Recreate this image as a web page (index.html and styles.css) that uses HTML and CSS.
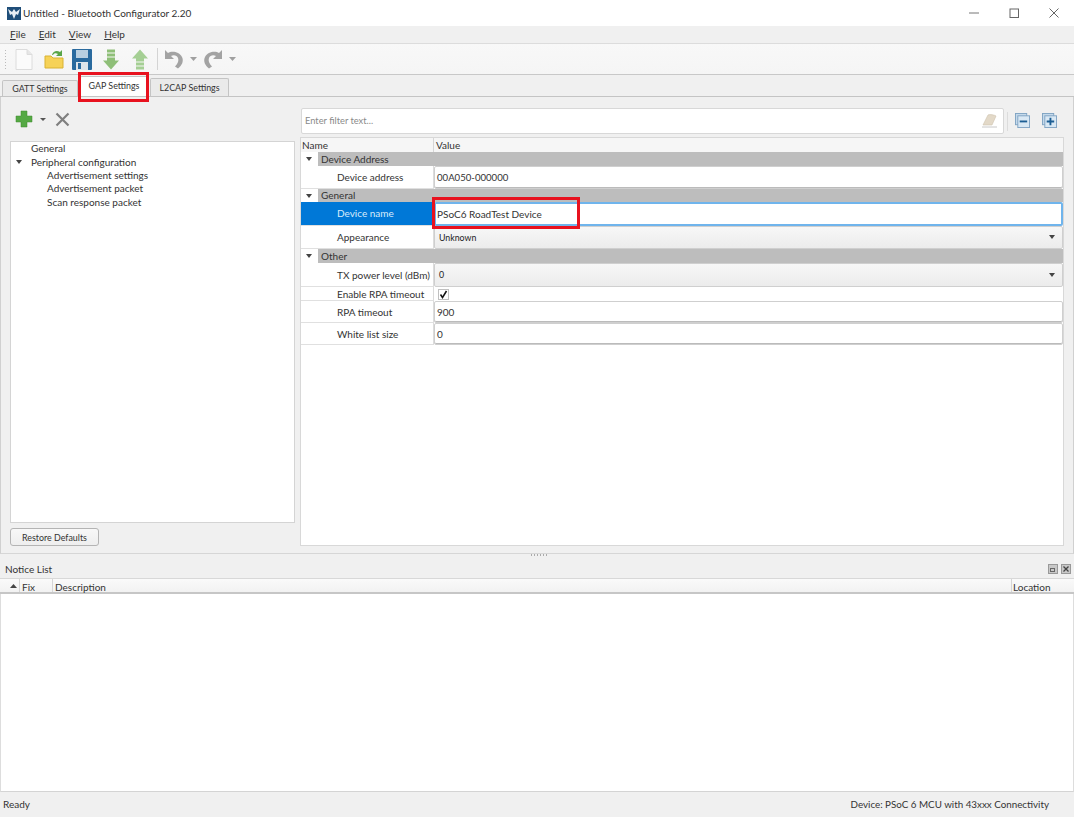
FILE: index.html
```html
<!DOCTYPE html>
<html lang="en">
<head>
<meta charset="utf-8">
<title>Untitled - Bluetooth Configurator 2.20</title>
<link rel="stylesheet" href="styles.css">
</head>
<body>
<div class="window">
  <header class="titlebar">
    <svg class="appicon" width="14" height="13" viewBox="0 0 14 13"><rect width="14" height="13" fill="#1f4e79"/><path d="M1 2l4 3 2-3 2 3 4-3-2 6-2-1-2 5-2-5-2 1z" fill="#e8eef4"/></svg>
    <span class="title">Untitled - Bluetooth Configurator 2.20</span>
    <div class="winctl">
      <svg width="12" height="12" viewBox="0 0 12 12"><path d="M1 6h10" stroke="#777" fill="none"/></svg>
      <svg width="12" height="12" viewBox="0 0 12 12"><rect x="2" y="2" width="8.5" height="8.5" stroke="#666" fill="none"/></svg>
      <svg width="12" height="12" viewBox="0 0 12 12"><path d="M1.5 1.5l9 9M10.5 1.5l-9 9" stroke="#666" fill="none"/></svg>
    </div>
  </header>
  <nav class="menubar"><span><u>F</u>ile</span><span><u>E</u>dit</span><span><u>V</u>iew</span><span><u>H</u>elp</span></nav>
  <div class="toolbar">
    <div class="grip"></div>
    <svg class="t-new" width="18" height="21" viewBox="0 0 18 21"><path d="M1 .5h11l5 5v15H1z" fill="#fbfbfb" stroke="#dcdcdc"/><path d="M12 .5v5h5" fill="#e6e6e6" stroke="#dcdcdc"/></svg>
    <svg class="t-open" width="20" height="20" viewBox="0 0 20 20"><path d="M1 7h6l2 2h10v10H1z" fill="#f6d257" stroke="#d9b233"/><path d="M8 6c1-4 5-5 8-3l2-2v6h-6l2-2c-2-1-4-1-5 1z" fill="#5aa548"/></svg>
    <svg class="t-save" width="20" height="21" viewBox="0 0 20 21"><rect width="20" height="21" rx="1" fill="#2a6a9e"/><rect x="4" y="1" width="12" height="8" fill="#b9cfe0"/><rect x="4" y="13" width="12" height="8" fill="#dfe5ea"/><rect x="6" y="14" width="3" height="6" fill="#2a6a9e"/></svg>
    <svg class="t-down" width="18" height="21" viewBox="0 0 18 21"><path d="M5 .5h8v3H5zM5 4.500h8v3H5zM5 8.500h8v3h4l-8 9-8-9h4z" fill="#8fbf78"/></svg>
    <svg class="t-up" width="18" height="21" viewBox="0 0 18 21"><path d="M9 .5l8 9h-4v3H5v-3H1zM5 13.500h8v3H5zM5 17.500h8v3H5z" fill="#a5cf94"/></svg>
    <div class="tb-sep"></div>
    <svg class="t-undo" width="21" height="20" viewBox="0 0 21 20"><path d="M2 1v9h9L8 7c3-1.500 6-.5 7 2 1 2.500 0 5.500-3 8.500l3 2c4-3 6-7.500 4-11.500C16.500 3 9 1.500 5 4z" fill="#a3a3a3"/></svg>
    <svg class="t-drop1" width="7" height="4" viewBox="0 0 7 4"><path d="M0 0h7L3.500 4z" fill="#a0a0a0"/></svg>
    <svg class="t-redo" width="21" height="20" viewBox="0 0 21 20"><path d="M19 1v9h-9l3-3c-3-1.500-6-.5-7 2-1 2.500 0 5.500 3 8.500l-3 2c-4-3-6-7.500-4-11.500C4.500 3 12 1.500 16 4z" fill="#a3a3a3"/></svg>
    <svg class="t-drop2" width="7" height="4" viewBox="0 0 7 4"><path d="M0 0h7L3.500 4z" fill="#a0a0a0"/></svg>
  </div>
  <div class="tabs">
    <div class="tab t1">GATT Settings</div>
    <div class="tab t2">GAP Settings</div>
    <div class="tab t3">L2CAP Settings</div>
  </div>
  <main class="page">
    <section class="left">
      <div class="leftbar">
        <svg width="18" height="18" viewBox="0 0 18 18"><path d="M6 1h6v5h5v6h-5v5H6v-5H1V6h5z" fill="#55a944" stroke="#3c8a2e" stroke-width=".5"/></svg>
        <svg class="plusdrop" width="6" height="3" viewBox="0 0 6 3"><path d="M0 0h6L3 3z" fill="#555"/></svg>
        <svg width="15" height="15" viewBox="0 0 15 15"><path d="M1.500 1.500l12 12M13.500 1.500l-12 12" stroke="#7f7f7f" stroke-width="2.200" fill="none"/></svg>
      </div>
      <div class="tree">
        <div class="node lvl1">General</div>
        <div class="node lvl1"><span class="tw"></span>Peripheral configuration</div>
        <div class="node lvl2">Advertisement settings</div>
        <div class="node lvl2">Advertisement packet</div>
        <div class="node lvl2">Scan response packet</div>
      </div>
      <div class="btnrow"><button class="btn" type="button">Restore Defaults</button></div>
    </section>
    <section class="right">
      <div class="filterrow">
        <div class="filter">
          <span>Enter filter text...</span>
          <svg width="16" height="15" viewBox="0 0 16 15"><path d="M1 12L6 2c1-1 7 0 8 1l-4 9z" fill="#e3d9c8" stroke="#cfc3ae" stroke-width=".6"/><path d="M0 14h15" stroke="#c8c8c8"/></svg>
        </div>
        <div class="fsep"></div>
        <svg class="f-btn" width="15" height="15" viewBox="0 0 16 16"><rect x=".5" y=".5" width="12" height="12" fill="#c5d9ea" stroke="#7fa3c3"/><rect x="3" y="3" width="12.500" height="12.500" fill="#d9e8f4" stroke="#7fa3c3"/><path d="M5 9h8" stroke="#1d5e94" stroke-width="2"/></svg>
        <svg class="f-btn" width="15" height="15" viewBox="0 0 16 16"><rect x=".5" y=".5" width="12" height="12" fill="#c5d9ea" stroke="#7fa3c3"/><rect x="3" y="3" width="12.500" height="12.500" fill="#d9e8f4" stroke="#7fa3c3"/><path d="M5 9h8M9 5v8" stroke="#1d5e94" stroke-width="2"/></svg>
      </div>
      <div class="grid">
        <div class="head"><div class="hname">Name</div><div>Value</div></div>
        <div class="group g14"><i class="tw"></i><span>Device Address</span></div>
        <div class="row r23"><div class="k">Device address</div><div class="v input addr">00A050-000000</div></div>
        <div class="group g13"><i class="tw"></i><span>General</span></div>
        <div class="row r24 sel"><div class="k">Device name</div><div class="v input focus">PSoC6 RoadTest Device</div></div>
        <div class="row r23"><div class="k">Appearance</div><div class="v combo">Unknown<i class="caret"></i></div></div>
        <div class="group g14"><i class="tw"></i><span>Other</span></div>
        <div class="row r24"><div class="k">TX power level (dBm)</div><div class="v combo">0<i class="caret"></i></div></div>
        <div class="row r14"><div class="k">Enable RPA timeout</div><div class="v check"><span class="box"><svg width="9" height="9" viewBox="0 0 9 9"><path d="M1.500 4.500l2 3 4-6.500" stroke="#111" stroke-width="1.500" fill="none"/></svg></span></div></div>
        <div class="row r22"><div class="k">RPA timeout</div><div class="v input">900</div></div>
        <div class="row r22"><div class="k">White list size</div><div class="v input">0</div></div>
      </div>
    </section>
    <div class="splitgrip"></div>
  </main>
  <section class="notice">
    <div class="noticetitle"><span>Notice List</span>
      <div class="dockbtns">
        <svg width="10" height="10" viewBox="0 0 10 10"><rect x=".5" y=".5" width="9" height="9" fill="#c8c8c8" stroke="#999"/><rect x="2.500" y="4.500" width="4" height="3" fill="none" stroke="#666"/></svg>
        <svg width="10" height="10" viewBox="0 0 10 10"><rect x=".5" y=".5" width="9" height="9" fill="#c8c8c8" stroke="#999"/><path d="M2.500 2.500l5 5M7.500 2.500l-5 5" stroke="#444" stroke-width="1.300"/></svg>
      </div>
    </div>
    <div class="noticehead">
      <div class="c-sort"><svg width="7" height="4" viewBox="0 0 7 4"><path d="M0 4h7L3.500 0z" fill="#444"/></svg></div>
      <div class="c-fix">Fix</div>
      <div class="c-desc">Description</div>
      <div class="c-loc">Location</div>
    </div>
    <div class="noticebody"></div>
  </section>
  <footer class="status"><span>Ready</span><span class="device">Device: PSoC 6 MCU with 43xxx Connectivity</span></footer>
  <div class="mark mark-tab"></div>
  <div class="mark mark-name"></div>
</div>
</body>
</html>
```

FILE: styles.css
```css
* { box-sizing: border-box; }
html, body { margin: 0; padding: 0; }
body { width: 1074px; height: 817px; overflow: hidden; background: #fff; }
.window {
  position: relative; width: 1074px; height: 817px; display: flex; flex-direction: column;
  font-family: Lato, "Open Sans", sans-serif; font-size: 10px; color: #333; background: #f0f0f0;
}
svg { display: block; flex: none; }
.titlebar { height: 26px; background: #fff; display: flex; align-items: center; padding: 0 14px 0 7px; }
.appicon { margin-right: 2px; }
.winctl { margin-left: auto; display: flex; gap: 28px; }
.menubar { height: 18px; display: flex; align-items: center; padding: 0 0 1px 10px; gap: 13px; background: #f0f0f0; border-bottom: 1px solid #dcdcdc; }
.toolbar { height: 31px; display: flex; align-items: center; padding-left: 4px; background: linear-gradient(#f8f8f8, #f5f5f5); border-bottom: 1px solid #c8c8c8; }
.grip { width: 3px; height: 20px; background-image: radial-gradient(#bbb 40%, transparent 45%); background-size: 3px 3px; }
.t-new { margin-left: 8px; }
.t-open { margin-left: 11px; }
.t-save { margin-left: 8px; }
.t-down { margin-left: 10px; }
.t-up { margin-left: 11px; }
.tb-sep { width: 1px; height: 22px; background: #d4d4d4; margin-left: 8px; }
.t-undo { margin-left: 5px; }
.t-drop1 { margin-left: 6px; }
.t-redo { margin-left: 6px; }
.t-drop2 { margin-left: 5px; }
.tabs { height: 22px; display: flex; align-items: flex-end; padding-left: 2px; background: #f0f0f0; border-bottom: 1px solid #c4c4c4; }
.tab { height: 16px; display: flex; align-items: center; justify-content: center; background: #eaeaea; border: 1px solid #c4c4c4; border-bottom: 0; border-radius: 2px 2px 0 0; white-space: nowrap; font-size: 8.900px; }
.t1 { width: 76px; }
.t2 { width: 68px; height: 20px; margin: 0 2px 0 2px; background: #fff; padding-bottom: 2px; }
.t3 { width: 79px; height: 18px; }
.page { position: relative; height: 457px; display: flex; background: #f0f0f0; border-bottom: 1px solid #d6d6d6; border-left: 1px solid #d0d0d0; border-right: 1px solid #d0d0d0; padding: 0 9px; }
.left { width: 285px; display: flex; flex-direction: column; flex: none; }
.leftbar { height: 44px; display: flex; align-items: center; padding-left: 5px; }
.plusdrop { margin: 0 9px 0 7px; }
.tree { height: 382px; background: #fff; border: 1px solid #d4d4d4; }
.node { height: 13.400px; line-height: 13px; display: flex; align-items: center; position: relative; }
.lvl1 { padding-left: 20px; }
.lvl2 { padding-left: 36px; }
.node .tw { position: absolute; left: 5px; top: 5px; }
.tw { display: block; width: 0; height: 0; border-left: 3.500px solid transparent; border-right: 3.500px solid transparent; border-top: 4px solid #444; }
.btnrow { padding-top: 5px; }
.btn { width: 89px; height: 18px; padding: 0; font: inherit; font-size: 8.900px; color: #333; background: linear-gradient(#f8f8f8, #eeeeee); border: 1px solid #b4b4b4; border-radius: 3px; display: block; }
.right { margin-left: 5px; width: 764px; flex: none; display: flex; flex-direction: column; padding-top: 11px; }
.filterrow { height: 26px; display: flex; align-items: center; padding-left: 1px; }
.filter { width: 703px; height: 26px; background: #fff; border: 1px solid #d8d8d8; border-radius: 2px; display: flex; align-items: center; justify-content: space-between; padding: 0 5px 1px 3px; color: #8a8a8a; font-size: 9.300px; }
.fsep { width: 1px; height: 19px; background: #dcdcdc; margin: 0 7px 0 3px; }
.f-btn { margin-bottom: 1px; }
.f-btn + .f-btn { margin-left: 12px; }
.grid { margin-top: 3px; height: 409px; background: #fff; border: 1px solid #d8d8d8; }
.head { height: 14px; display: grid; grid-template-columns: 133px 1fr; align-items: center; background: #f6f6f6; }
.hname { padding-left: 1px; border-right: 1px solid #d6d6d6; height: 100%; line-height: 15px; }
.head div:last-child { padding-left: 2px; line-height: 15px; }
.group { display: flex; align-items: center; }
.group .tw { margin: 0 6px 0 5px; }
.group span { flex: 1; height: 100%; padding: 0 0 1px 3px; background: #bdbdbd; display: flex; align-items: center; }
.g14 { height: 14px; }
.g13 { height: 13px; }
.row { display: grid; grid-template-columns: 133px 1fr; }
.r24 { height: 24px; }
.r23 { height: 23px; }
.r14 { height: 14px; }
.r22 { height: 22px; }
.k { padding-left: 36px; display: flex; align-items: center; white-space: nowrap; border-right: 1px solid #dcdcdc; border-bottom: 1px solid #e0e0e0; }
.sel .k { background: #0078d7; color: #d9ecfb; padding-bottom: 1px; }
.v { display: flex; align-items: center; }
.input { background: #fff; border: 1px solid #cfcfcf; border-radius: 2px; padding-left: 2px; box-shadow: inset 0 -1px 0 #bbb; }
.addr { font-size: 9.600px; }
.focus { border: 2px solid #6fb4ec; padding: 0 0 1px 1px; box-shadow: none; }
.combo { background: linear-gradient(#f7f7f7, #ececec); border: 1px solid #cfcfcf; border-radius: 2px; padding: 0 7px 1px 4px; justify-content: space-between; font-size: 8.800px; color: #222; }
.caret { width: 0; height: 0; border-left: 3.500px solid transparent; border-right: 3.500px solid transparent; border-top: 4px solid #444; }
.check { padding-left: 4px; }
.box { width: 11px; height: 11px; border: 1px solid #c0c0c0; background: #fff; display: flex; align-items: center; justify-content: center; }
.splitgrip { position: absolute; left: 529px; bottom: -3px; width: 18px; height: 2px; background-image: radial-gradient(#aaa 40%, transparent 45%); background-size: 3px 2px; }
.notice { flex: 1; display: flex; flex-direction: column; min-height: 0; margin-top: 6px; }
.noticetitle { height: 18px; display: flex; align-items: center; padding: 0 3px 1px 5px; justify-content: space-between; }
.dockbtns { display: flex; gap: 3px; }
.noticehead { height: 16px; display: flex; align-items: center; background: linear-gradient(#fafafa, #f2f2f2); border-top: 1px solid #d8d8d8; border-bottom: 2px solid #c6c6c6; }
.c-sort { width: 20px; height: 100%; display: flex; align-items: center; justify-content: flex-end; padding-right: 2px; border-right: 1px solid #d6d6d6; }
.c-fix { width: 33px; height: 100%; padding-left: 2px; line-height: 16px; border-right: 1px solid #d6d6d6; }
.c-desc { flex: 1; padding-left: 2px; height: 100%; line-height: 16px; border-right: 1px solid #d6d6d6; }
.c-loc { width: 62px; padding-left: 1px; height: 100%; line-height: 16px; }
.noticebody { flex: 1; background: #fff; border-left: 1px solid #ddd; border-right: 1px solid #ddd; border-bottom: 1px solid #d4d4d4; }
.status { height: 25px; display: flex; align-items: center; justify-content: space-between; padding: 0 25px 1px 3px; flex: none; }
.device { font-size: 9.800px; }
.mark { position: absolute; border: 3px solid #e8121f; pointer-events: none; }
.mark-tab { left: 78px; top: 72px; width: 71px; height: 30px; }
.mark-name { left: 432px; top: 197px; width: 148px; height: 32px; }
```
